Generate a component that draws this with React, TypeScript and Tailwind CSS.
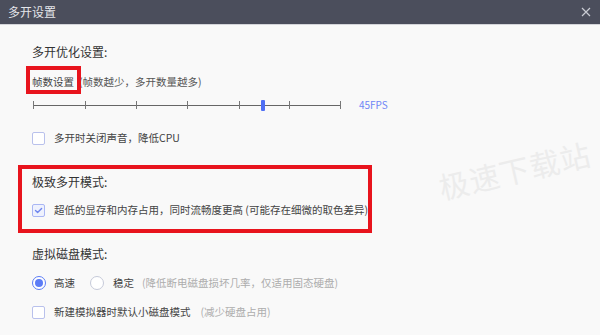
import React from 'react';

const font = { fontFamily: '"Noto Sans CJK SC", "Noto Sans", sans-serif' };

// simple checkbox drawn with css
const Checkbox: React.FC<{ checked?: boolean }> = ({ checked }) => (
  <span
    className={
      'flex h-[13px] w-[13px] shrink-0 items-center justify-center rounded-[2px] border ' +
      (checked ? 'border-[#a9b6f4] bg-[#eef1fd]' : 'border-[#b9c1ec] bg-white')
    }
  >
    {checked && (
      <svg width="9" height="9" viewBox="0 0 9 9" fill="none">
        <path d="M1.5 4.6 L3.6 6.6 L7.6 2.4" stroke="#6f86ee" strokeWidth="1.4" strokeLinecap="round" strokeLinejoin="round" />
      </svg>
    )}
  </span>
);

const Radio: React.FC<{ checked?: boolean }> = ({ checked }) => (
  <span
    className={
      'flex h-[14px] w-[14px] shrink-0 items-center justify-center rounded-full border bg-white ' +
      (checked ? 'border-[#5c7cf6]' : 'border-[#c6cad9]')
    }
  >
    {checked && <span className="h-[8px] w-[8px] rounded-full bg-[#5c7cf6]" />}
  </span>
);

const ticks = [33, 85, 136, 187, 239, 289, 340];

const App: React.FC = () => {
  return (
    <div className="relative h-[335px] w-[600px] overflow-hidden bg-[#f9f9f9]" style={font}>
      {/* Title bar */}
      <div className="flex h-[25px] items-center justify-between border-b border-[#d4d5da] bg-[#4b4e5c] pl-[8px] pr-[7px]">
        <span className="text-[12px] text-[#e4e5ea]">多开设置</span>
        <svg width="10" height="10" viewBox="0 0 10 10" className="mr-[2px]">
          <path d="M1 1 L9 9 M9 1 L1 9" stroke="#c9cbd3" strokeWidth="1.2" />
        </svg>
      </div>

      {/* Content */}
      <div className="flex flex-col pt-[17px]">
        <div className="flex h-[20px] items-center pl-[32px] text-[12px] text-[#333]">多开优化设置:</div>

        <div className="mt-[10px] flex h-[20px] items-center pl-[32px] text-[10.5px] text-[#444]">
          <span className="relative">
            帧数设置
            <span className="pointer-events-none absolute -left-[6px] -right-[7px] -top-[8px] -bottom-[4px] border-4 border-[#e8141d]" />
          </span>
          <span className="ml-[5px] text-[#555]">(帧数越少，多开数量越多)</span>
        </div>

        {/* slider */}
        <div className="relative mt-[7px] h-[12px]">
          <div className="absolute left-[33px] top-[6px] h-px w-[308px] bg-[#666]" />
          {ticks.map((x) => (
            <div key={x} className="absolute top-[2px] h-[8px] w-px bg-[#777]" style={{ left: x }} />
          ))}
          <div className="absolute left-[261px] top-[1px] h-[11px] w-[4px] rounded-[1px] bg-[#4f6ff5]" />
          <span className="absolute left-[359px] top-[-1px] text-[10px] leading-[14px] text-[#6f86f6]">45FPS</span>
        </div>

        <div className="mt-[19px] flex h-[16px] items-center gap-[9px] pl-[32px] text-[10.5px] text-[#444]">
          <Checkbox />
          <span>多开时关闭声音，降低CPU</span>
        </div>

        {/* highlighted section */}
        <div className="ml-[18px] mt-[19px] w-[354px] border-4 border-[#e8141d] pb-[11px] pl-[10px] pt-[3px]">
          <div className="flex h-[20px] items-center text-[12px] text-[#333]">极致多开模式:</div>
          <div className="mt-[10px] flex h-[16px] items-center gap-[9px] whitespace-nowrap text-[10.5px] text-[#444]">
            <Checkbox checked />
            <span>超低的显存和内存占用，同时流畅度更高 (可能存在细微的取色差异)</span>
          </div>
        </div>

        <div className="mt-[11px] flex h-[20px] items-center pl-[32px] text-[12px] text-[#333]">虚拟磁盘模式:</div>

        <div className="mt-[11px] flex h-[16px] items-center pl-[32px] text-[10.5px] text-[#444]">
          <Radio checked />
          <span className="ml-[8px]">高速</span>
          <span className="ml-[15px]">
            <Radio />
          </span>
          <span className="ml-[9px]">稳定</span>
          <span className="ml-[8px] text-[#adadad]">(降低断电磁盘损坏几率，仅适用固态硬盘)</span>
        </div>

        <div className="mt-[13px] flex h-[16px] items-center gap-[9px] pl-[32px] text-[10.5px] text-[#444]">
          <Checkbox />
          <span>新建模拟器时默认小磁盘模式</span>
          <span className="ml-[1px] text-[#adadad]">(减少硬盘占用)</span>
        </div>
      </div>

      {/* watermark */}
      <div className="pointer-events-none absolute left-[439px] top-[172px] origin-left -rotate-[13deg] text-[30px] leading-none tracking-[1px] text-[#ececec]">
        极速下载站
      </div>
    </div>
  );
};

export default App;
